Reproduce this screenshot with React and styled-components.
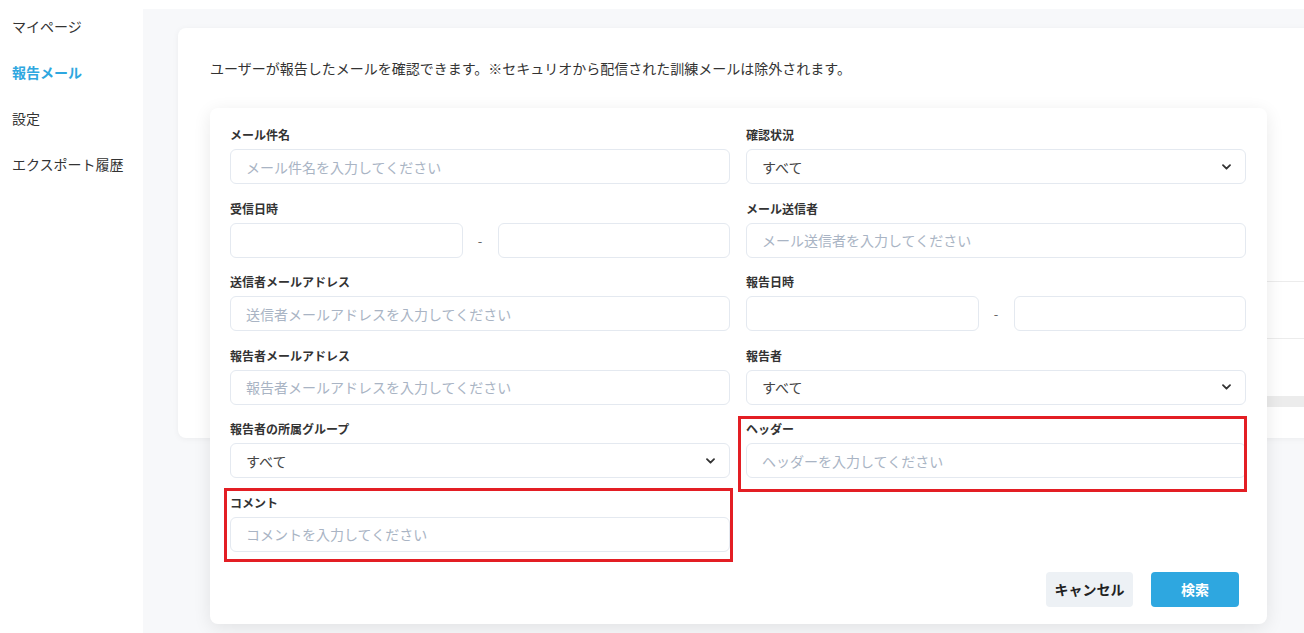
import styled, { createGlobalStyle } from "styled-components"

const GlobalStyle = createGlobalStyle`
  html, body {
    margin: 0;
    padding: 0;
    background: #fff;
    font-family: "Noto Sans CJK JP", "Noto Sans", sans-serif;
    color: #333;
  }
  * { box-sizing: border-box; }
`

const Page = styled.div`
  position: relative;
  display: flex;
  width: 1304px;
  height: 633px;
  overflow: hidden;
`

const Sidebar = styled.nav`
  width: 143px;
  flex-shrink: 0;
  padding: 14px 0 0 12px;
  display: flex;
  flex-direction: column;
  gap: 22px;
`

const NavItem = styled.div`
  font-size: 14px;
  line-height: 24px;
  color: ${props => (props.active ? "#2ea7e0" : "#333")};
  font-weight: ${props => (props.active ? 700 : 400)};
  white-space: nowrap;
`

const Main = styled.main`
  flex: 1;
  margin-top: 9px;
  background: #f7f8fa;
  padding: 19px 0 0 35px;
  overflow: hidden;
`

const Card = styled.section`
  width: calc(100% + 40px);
  background: #fff;
  border-radius: 8px;
  box-shadow: 0 1px 6px rgba(0, 0, 0, 0.05);
  padding: 30px 0 31px 32px;
`

const Description = styled.p`
  margin: 0;
  font-size: 14px;
  line-height: 20px;
  color: #333;
`

const Table = styled.div`
  margin-top: 147px;
`

const TableRow = styled.div`
  height: 57px;
  border-bottom: ${props => (props.last ? "none" : "1px solid #ececec")};
`

const ScrollBar = styled.div`
  height: 11px;
  background: #ececec;
`

const Dialog = styled.div`
  position: absolute;
  left: 210px;
  top: 108px;
  width: 1057px;
  background: #fff;
  border-radius: 8px;
  box-shadow: 0 4px 18px rgba(0, 0, 0, 0.09);
  padding: 18px 21px 17px 20px;
`

const FieldGrid = styled.div`
  display: grid;
  grid-template-columns: 500px 500px;
  column-gap: 16px;
  row-gap: 15.6px;
`

const Field = styled.div`
  position: relative;
  display: flex;
  flex-direction: column;
`

const Highlight = styled.div`
  position: absolute;
  inset: ${props => props.inset};
  border: 3px solid #e31e24;
  pointer-events: none;
`

const Label = styled.label`
  font-size: 12px;
  line-height: 18px;
  font-weight: 700;
  color: #333;
  margin-bottom: 5px;
`

const Input = styled.input`
  width: 100%;
  height: 35px;
  border: 1px solid #e4e9f0;
  border-radius: 6px;
  padding: 0 15px;
  font-family: inherit;
  font-size: 14px;
  color: #333;
  background: #fff;
  outline: none;
  &::placeholder {
    color: #a9b4c4;
  }
`

const RangeRow = styled.div`
  display: grid;
  grid-template-columns: 1fr 35px 1fr;
  align-items: center;
`

const Dash = styled.span`
  text-align: center;
  font-size: 13px;
  color: #666;
`

const SelectBox = styled.div`
  height: 35px;
  border: 1px solid #e4e9f0;
  border-radius: 6px;
  padding: 0 14px 0 15px;
  display: flex;
  align-items: center;
  justify-content: space-between;
  font-size: 14px;
  color: #444;
`

const Actions = styled.div`
  display: flex;
  justify-content: flex-end;
  gap: 18px;
  margin-top: 20px;
  padding-right: 7px;
`

const Button = styled.button`
  height: 35px;
  width: ${props => props.w}px;
  border: none;
  border-radius: 4px;
  font-family: inherit;
  font-size: 14px;
  font-weight: 700;
  background: ${props => (props.primary ? "#2ea7e0" : "#edf1f5")};
  color: ${props => (props.primary ? "#fff" : "#222")};
  cursor: pointer;
`

const Chevron = () => (
  <svg width="9" height="6" viewBox="0 0 9 6" fill="none">
    <path d="M1 1.2l3.5 3.5L8 1.2" stroke="#333" strokeWidth="1.8" strokeLinecap="round" strokeLinejoin="round" />
  </svg>
)

const Select = ({ value }) => (
  <SelectBox>
    <span>{value}</span>
    <Chevron />
  </SelectBox>
)

const navItems = ["マイページ", "報告メール", "設定", "エクスポート履歴"]

const App = () => {
  return (
    <Page>
      <GlobalStyle />
      <Sidebar>
        {navItems.map(item => (
          <NavItem key={item} active={item === "報告メール"}>{item}</NavItem>
        ))}
      </Sidebar>

      <Main>
        <Card>
          <Description>
            ユーザーが報告したメールを確認できます。※セキュリオから配信された訓練メールは除外されます。
          </Description>
          <Table>
            <TableRow />
            <TableRow />
            <TableRow last />
            <ScrollBar />
          </Table>
        </Card>
      </Main>

      <Dialog>
        <FieldGrid>
          <Field>
            <Label>メール件名</Label>
            <Input placeholder="メール件名を入力してください" />
          </Field>
          <Field>
            <Label>確認状況</Label>
            <Select value="すべて" />
          </Field>

          <Field>
            <Label>受信日時</Label>
            <RangeRow>
              <Input />
              <Dash>-</Dash>
              <Input />
            </RangeRow>
          </Field>
          <Field>
            <Label>メール送信者</Label>
            <Input placeholder="メール送信者を入力してください" />
          </Field>

          <Field>
            <Label>送信者メールアドレス</Label>
            <Input placeholder="送信者メールアドレスを入力してください" />
          </Field>
          <Field>
            <Label>報告日時</Label>
            <RangeRow>
              <Input />
              <Dash>-</Dash>
              <Input />
            </RangeRow>
          </Field>

          <Field>
            <Label>報告者メールアドレス</Label>
            <Input placeholder="報告者メールアドレスを入力してください" />
          </Field>
          <Field>
            <Label>報告者</Label>
            <Select value="すべて" />
          </Field>

          <Field>
            <Label>報告者の所属グループ</Label>
            <Select value="すべて" />
          </Field>
          <Field>
            <Label>ヘッダー</Label>
            <Input placeholder="ヘッダーを入力してください" />
            <Highlight inset="-4px -1px -14px -8px" />
          </Field>

          <Field>
            <Label>コメント</Label>
            <Input placeholder="コメントを入力してください" />
            <Highlight inset="-6px -3px -10px -6px" />
          </Field>
        </FieldGrid>

        <Actions>
          <Button w={87}>キャンセル</Button>
          <Button primary w={88}>検索</Button>
        </Actions>
      </Dialog>
    </Page>
  )
}

export default App
